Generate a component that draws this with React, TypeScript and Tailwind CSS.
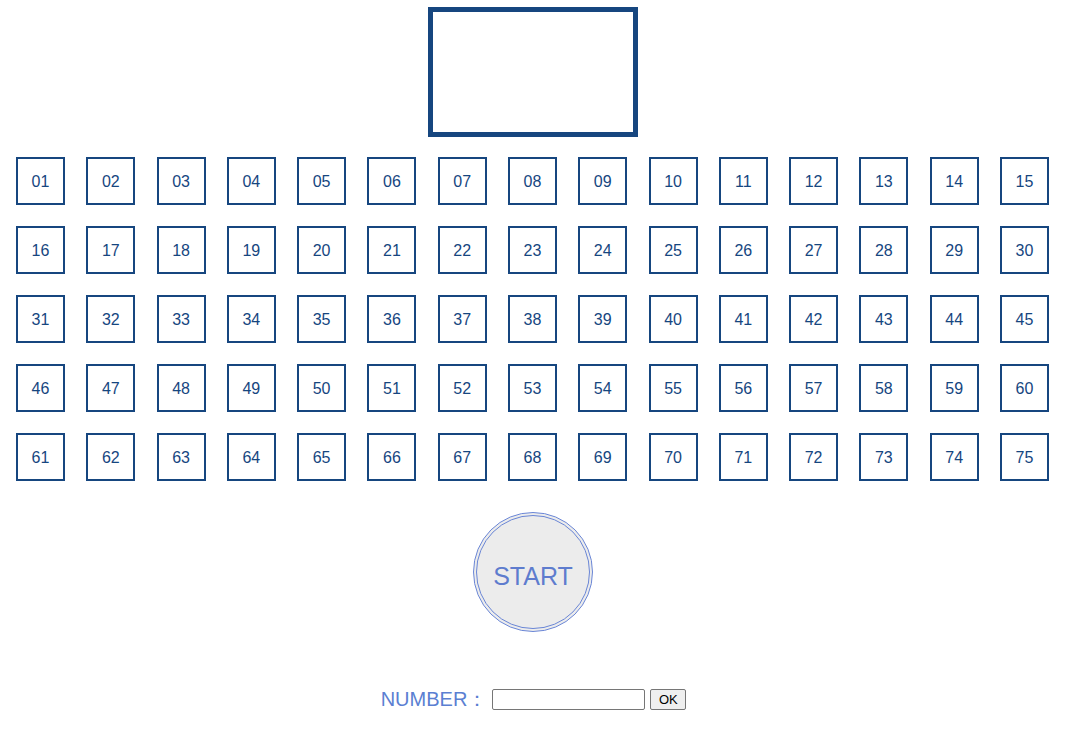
import React from "react";

export default function App() {
  const rows = [0, 1, 2, 3, 4];
  const cols = Array.from({ length: 15 }, (_, i) => i);
  return (
    <div
      className="w-[1067px] h-[746px] bg-white relative"
      style={{ fontFamily: '"Liberation Sans", Arial, sans-serif' }}
    >
      <div className="pt-[7px] flex justify-center pr-[1px]">
        <div className="w-[210px] h-[130px] border-[5px] border-[#16467f]" />
      </div>
      <div className="mt-[20px] flex flex-col gap-[21px] pl-[16px] pr-[18px]">
        {rows.map((r) => (
          <div key={r} className="flex justify-between">
            {cols.map((c) => {
              const n = r * 15 + c + 1;
              return (
                <div
                  key={c}
                  className="w-[49px] h-[48px] border-2 border-[#16467f] flex items-center justify-center text-[16px] text-[#16467f] pt-[2px]"
                >
                  {String(n).padStart(2, "0")}
                </div>
              );
            })}
          </div>
        ))}
      </div>
      <div className="mt-[31px] flex justify-center pr-[1px]">
        <div className="w-[120px] h-[120px] rounded-full border-[4px] border-double border-[#6a86d6] bg-[#ececec] flex items-center justify-center text-[25px] text-[#5e7cce] pt-[9px]">
          START
        </div>
      </div>
      <div className="mt-[57px] flex justify-center items-center">
        <span className="text-[20px] text-[#5b7fd2] leading-[22px] -mt-[2px]">NUMBER：</span>
        <input
          type="text"
          className="ml-[5px] w-[153px] h-[21px] border border-[#767676] rounded-[2px] bg-white"
        />
        <button className="ml-[5px] w-[36px] h-[21px] border border-[#767676] rounded-[2px] bg-[#efefef] text-[13px] text-black leading-none">
          OK
        </button>
      </div>
    </div>
  );
}
